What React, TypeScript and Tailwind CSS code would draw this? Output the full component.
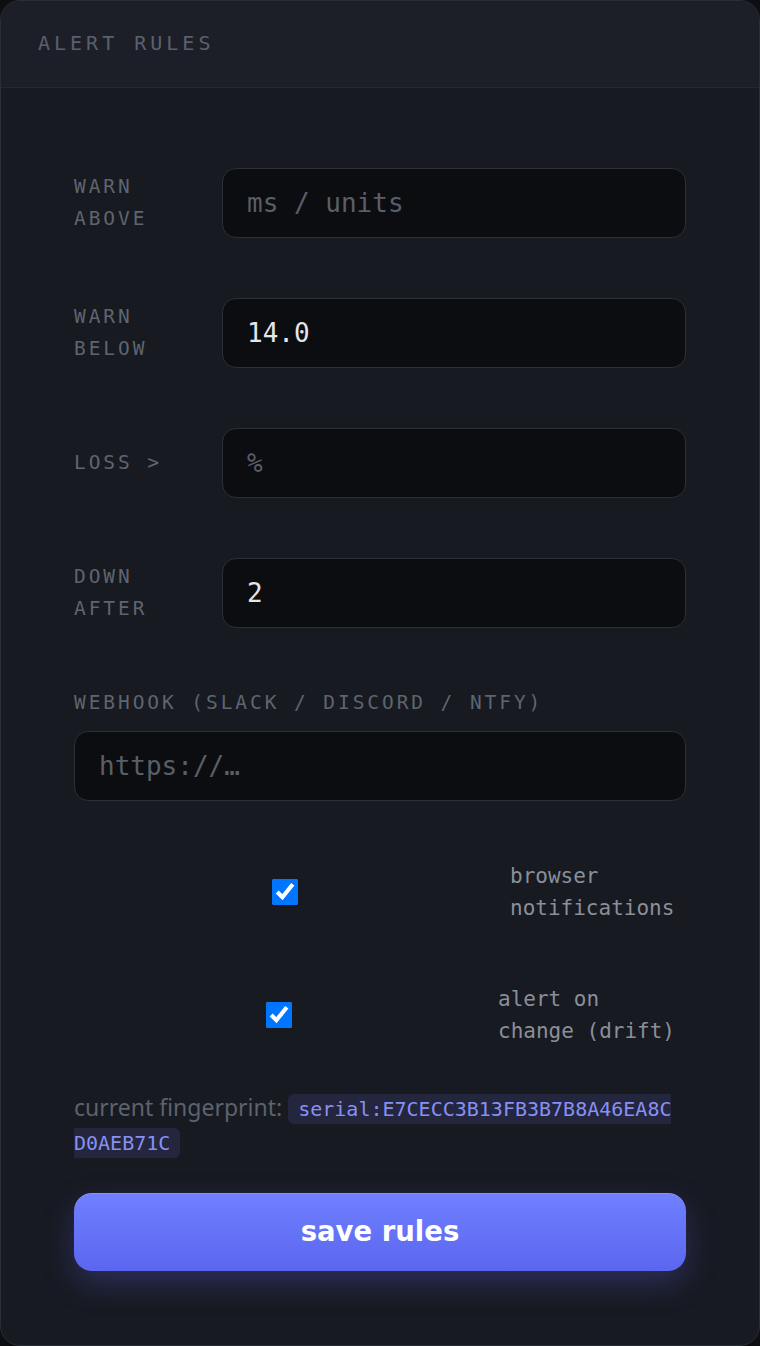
const mono = "font-['DejaVu_Sans_Mono','Liberation_Mono',monospace]";

const rules = [
  { label: "WARN ABOVE", placeholder: "ms / units", value: "" },
  { label: "WARN BELOW", placeholder: "ms / units", value: "14.0" },
  { label: "LOSS >", placeholder: "%", value: "" },
  { label: "DOWN AFTER", placeholder: "checks", value: "2" },
];

export default function App() {
  return (
    <div className="min-h-screen bg-[#0d0e11]">
      <div className="flex h-[1346px] w-[760px] flex-col overflow-hidden rounded-[20px] border border-[#2a2e37] bg-[#171a21]">
        <div className="flex h-[87px] items-center border-b border-[#252932] bg-[#1c1f27] px-[37px] pb-[2px]">
          <h2 className={`${mono} text-[20px] tracking-[0.2em] text-[#5b606b]`}>ALERT RULES</h2>
        </div>

        <div className="flex flex-col px-[73px] pt-[80px]">
          <div className="flex flex-col gap-[60px]">
            {rules.map((r) => (
              <div key={r.label} className="grid grid-cols-[148px_1fr] items-center">
                <label className={`${mono} pr-[10px] text-[19.5px] leading-[32px] tracking-[0.15em] text-[#5f646e]`}>
                  {r.label}
                </label>
                <input
                  defaultValue={r.value}
                  placeholder={r.placeholder}
                  className={`${mono} h-[70px] w-full rounded-[14px] border border-[#2d3038] bg-[#0c0d10] px-[24px] text-[26px] text-[#e4e6eb] outline-none placeholder:text-[#5a5e68]`}
                />
              </div>
            ))}
          </div>

          <label className={`${mono} mt-[59px] text-[19.5px] leading-[32px] tracking-[0.15em] text-[#5f646e]`}>
            WEBHOOK (SLACK / DISCORD / NTFY)
          </label>
          <input
            placeholder="https://…"
            className={`${mono} mt-[12px] h-[70px] w-full rounded-[14px] border border-[#2d3038] bg-[#0c0d10] px-[24px] text-[26px] text-[#e4e6eb] outline-none placeholder:text-[#5a5e68]`}
          />

          <label className="mt-[59px] flex items-center gap-[14px]">
            <span className="flex flex-1 justify-center">
              <input type="checkbox" defaultChecked className="m-0 h-[26px] w-[26px]" />
            </span>
            <span className={`${mono} w-[176px] pr-[10px] text-[21px] leading-[32px] text-[#8a8f99]`}>
              browser notifications
            </span>
          </label>

          <label className="mt-[59px] flex items-center gap-[14px]">
            <span className="flex flex-1 justify-center">
              <input type="checkbox" defaultChecked className="m-0 h-[26px] w-[26px]" />
            </span>
            <span className={`${mono} w-[188px] pr-[10px] text-[21px] leading-[32px] text-[#8a8f99]`}>
              alert on change (drift)
            </span>
          </label>

          <p className="mt-[44px] pr-[8px] font-['Noto_Sans',sans-serif] text-[23px] leading-[32px] text-[#5d626c]">
            current fingerprint:{" "}
            <code className={`${mono} break-all rounded-[6px] bg-[#23263d] px-[10px] py-[3px] text-[20px] text-[#8890f2]`}>
              serial:E7CECC3B13FB3B7B8A46EA8CD0AEB71C
            </code>
          </p>

          <button className="mt-[34px] h-[78px] w-full rounded-[18px] bg-gradient-to-b from-[#7080ff] to-[#5b66ef] font-['DejaVu_Sans',sans-serif] text-[27.5px] font-bold text-white shadow-[0_12px_32px_rgba(99,102,241,0.28),inset_0_1px_0_rgba(255,255,255,0.15)]">
            save rules
          </button>
        </div>
      </div>
    </div>
  );
}
